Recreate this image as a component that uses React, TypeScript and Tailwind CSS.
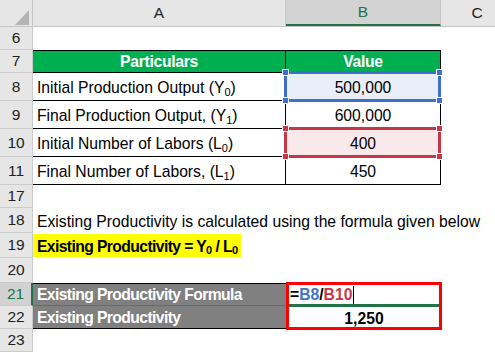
import React from 'react';

const FONT = { fontFamily: '"Liberation Sans", Arial, sans-serif' };

const Sub = ({ children }: { children: React.ReactNode }) => (
  <sub className="text-[11px] relative top-[3px] align-baseline">{children}</sub>
);

function RowHead({ n, active }: { n: string; active?: boolean }) {
  return (
    <div
      className={`w-[33px] shrink-0 flex items-center justify-center border-b border-r border-[#cbcbcb] text-[15.5px] ${
        active ? 'bg-[#d2d2d2] text-[#217346] border-r-2 border-r-[#217346]' : 'bg-[#e6e6e6] text-[#222]'
      }`}
    >
      {n}
    </div>
  );
}

function Handles({ color }: { color: string }) {
  const cls = `absolute w-[7px] h-[7px] border border-white ${color}`;
  return (
    <>
      <span className={`${cls} -left-[5px] -top-[5px]`} />
      <span className={`${cls} -right-[5px] -top-[5px]`} />
      <span className={`${cls} -left-[5px] -bottom-[5px]`} />
      <span className={`${cls} -right-[5px] -bottom-[5px]`} />
    </>
  );
}

function TableRow({
  n,
  label,
  value,
  sel,
}: {
  n: string;
  label: React.ReactNode;
  value: string;
  sel?: 'blue' | 'red';
}) {
  return (
    <div className="flex h-[28px]">
      <RowHead n={n} />
      <div className="w-[253px] shrink-0 flex items-center pl-[4px] pt-[2px] border-r border-b border-black text-[15.7px] text-black whitespace-nowrap">
        {label}
      </div>
      <div
        className={`w-[155px] shrink-0 relative flex items-center justify-center pt-[2px] border-r border-b border-black text-[15.7px] text-black ${
          sel === 'blue' ? 'bg-[#e9eff8]' : sel === 'red' ? 'bg-[#fae9ea]' : ''
        }`}
      >
        {sel === 'blue' && (
          <div className="absolute z-10 -left-[2px] -top-[2px] -right-[1px] -bottom-[2px] border-[3px] border-[#3f6fc9]">
            <Handles color="bg-[#3f6fc9]" />
          </div>
        )}
        {sel === 'red' && (
          <div className="absolute z-10 -left-[2px] -top-[2px] -right-[1px] -bottom-[2px] border-[3px] border-[#c4384a]">
            <Handles color="bg-[#c4384a]" />
          </div>
        )}
        <span className="relative">{value}</span>
      </div>
      <div className="flex-1" />
    </div>
  );
}

function PlainRow({ n, h, children, active }: { n: string; h: string; children?: React.ReactNode; active?: boolean }) {
  return (
    <div className={`flex ${h}`}>
      <RowHead n={n} active={active} />
      <div className="flex-1 flex items-center text-[15.7px] text-black whitespace-nowrap">{children}</div>
    </div>
  );
}

export default function App() {
  return (
    <div className="w-[495px] h-[352px] overflow-hidden bg-white select-none" style={FONT}>
      {/* column headers */}
      <div className="flex h-[27px] bg-[#e6e6e6] border-b border-[#c6c6c6] text-[15.5px] text-[#222]">
        <div className="w-[33px] shrink-0 relative border-r border-[#c6c6c6]">
          <svg className="absolute left-[15px] top-[10px]" width="14" height="15" viewBox="0 0 14 15">
            <polygon points="14,0 14,15 0,15" fill="#b4b4b4" />
          </svg>
        </div>
        <div className="w-[253px] shrink-0 flex items-center justify-center border-r border-[#c6c6c6]">A</div>
        <div className="w-[155px] shrink-0 flex items-center justify-center bg-[#d2d2d2] text-[#217346] border-r border-[#c6c6c6] border-b-2 border-b-[#217346]">
          B
        </div>
        <div className="w-[72px] shrink-0 flex items-center justify-center">C</div>
      </div>

      <PlainRow n="6" h="h-[23px]" />

      {/* table header */}
      <div className="flex h-[23px]">
        <RowHead n="7" />
        <div className="w-[253px] shrink-0 flex items-center justify-center bg-[#00b050] border-t border-r border-b border-black text-white font-bold text-[15.7px] tracking-[-0.3px]">
          Particulars
        </div>
        <div className="w-[155px] shrink-0 flex items-center justify-center bg-[#00b050] border-t border-r border-b border-black text-white font-bold text-[15.7px] tracking-[-0.3px]">
          Value
        </div>
        <div className="flex-1" />
      </div>

      <TableRow n="8" label={<span>Initial Production Output (Y<Sub>0</Sub>)</span>} value="500,000" sel="blue" />
      <TableRow n="9" label={<span>Final Production Output, (Y<Sub>1</Sub>)</span>} value="600,000" />
      <TableRow n="10" label={<span>Initial Number of Labors (L<Sub>0</Sub>)</span>} value="400" sel="red" />
      <TableRow n="11" label={<span>Final Number of Labors, (L<Sub>1</Sub>)</span>} value="450" />

      <PlainRow n="17" h="h-[23px]" />
      <PlainRow n="18" h="h-[25px]">
        <span className="pl-[4px] pt-[2px]">Existing Productivity is calculated using the formula given below</span>
      </PlainRow>
      <PlainRow n="19" h="h-[25px]">
        <span className="h-[23px] flex items-center pl-[4px] pr-[4px] pt-[2px] bg-[#ffff00] font-bold tracking-[-0.6px]">
          Existing Productivity = Y<Sub>0</Sub>&nbsp;/ L<Sub>0</Sub>
        </span>
      </PlainRow>
      <PlainRow n="20" h="h-[25px]" />

      {/* result rows */}
      <div className="flex h-[46px]">
        <div className="flex flex-col">
          <div className="h-[23px] flex">
            <RowHead n="21" active />
          </div>
          <div className="h-[23px] flex">
            <RowHead n="22" />
          </div>
        </div>
        <div className="w-[253px] shrink-0 flex flex-col bg-[#808080] border-t border-b border-black text-white font-bold text-[15.7px] tracking-[-0.6px] whitespace-nowrap">
          <div className="h-[22px] flex items-center pl-[4px] border-b border-[#6a6a6a]">Existing Productivity Formula</div>
          <div className="flex-1 flex items-center pl-[4px]">Existing Productivity</div>
        </div>
        <div className="w-[156px] shrink-0 -mt-[1px] h-[48px] flex flex-col border-[3px] border-[#ff0000] font-bold text-[15.7px]">
          <div className="h-[22px] flex items-center pl-[1px] border-b-[3px] border-[#217346] relative">
            <span className="text-black">=</span>
            <span className="text-[#4472c4]">B8</span>
            <span className="text-black">/</span>
            <span className="text-[#c4384a]">B10</span>
            <span className="w-[1px] h-[18px] bg-black ml-[1px]" />
          </div>
          <div className="flex-1 flex items-center justify-center text-black">1,250</div>
        </div>
        <div className="flex-1" />
      </div>

      <PlainRow n="23" h="h-[23px]" />
    </div>
  );
}
